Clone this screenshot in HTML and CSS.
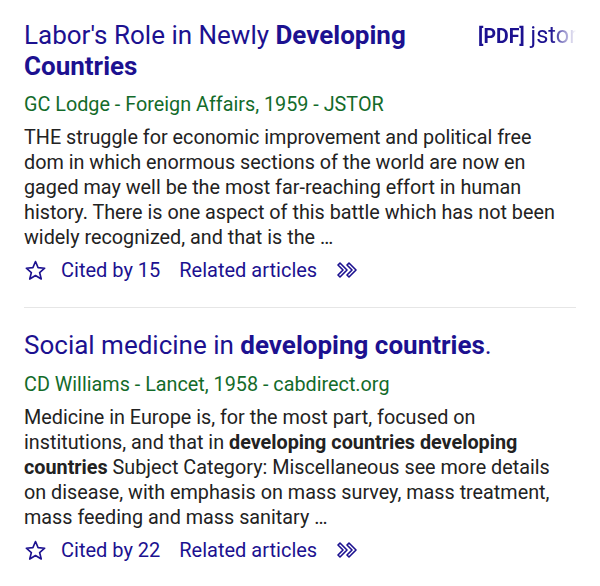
FILE: index.html
```html
<!DOCTYPE html>
<html>
<head>
<meta charset="utf-8">
<link rel="stylesheet" href="styles.css">
</head>
<body>
<div class="results">
  <div class="result">
    <div class="head">
      <h3 class="title"><a>Labor's Role in Newly <b>Developing Countries</b></a></h3>
      <div class="side"><span class="tag">[PDF]</span> jstor.org</div>
    </div>
    <div class="meta">GC Lodge - Foreign Affairs, 1959 - JSTOR</div>
    <div class="snippet">THE struggle for economic improvement and political free dom in which enormous sections of the world are now en gaged may well be the most far-reaching effort in human history. There is one aspect of this battle which has not been widely recognized, and that is the …</div>
    <div class="actions">
      <svg class="star" viewBox="0 0 24 24" width="23" height="23"><path d="M12 2.6l2.7 6.4 6.9.6-5.3 4.5 1.7 6.8L12 17.2l-6 3.7 1.7-6.8-5.3-4.5 6.9-.6z" fill="none" stroke="currentColor" stroke-width="1.7" stroke-linejoin="round"/></svg>
      <a>Cited by 15</a>
      <a>Related articles</a>
      <svg class="more" viewBox="0 0 24 16" width="24" height="16"><path d="M2 3l5 5-5 5 2 2 7-7-7-7z M11 3l5 5-5 5 2 2 7-7-7-7z" fill="none" stroke="currentColor" stroke-width="1.6" stroke-linejoin="round"/></svg>
    </div>
  </div>
  <div class="result">
    <div class="head">
      <h3 class="title"><a>Social medicine in <b>developing countries</b>.</a></h3>
    </div>
    <div class="meta">CD Williams - Lancet, 1958 - cabdirect.org</div>
    <div class="snippet">Medicine in Europe is, for the most part, focused on institutions, and that in <b>developing countries developing countries</b> Subject Category: Miscellaneous see more details on disease, with emphasis on mass survey, mass treatment, mass feeding and mass sanitary …</div>
    <div class="actions">
      <svg class="star" viewBox="0 0 24 24" width="23" height="23"><path d="M12 2.6l2.7 6.4 6.9.6-5.3 4.5 1.7 6.8L12 17.2l-6 3.7 1.7-6.8-5.3-4.5 6.9-.6z" fill="none" stroke="currentColor" stroke-width="1.7" stroke-linejoin="round"/></svg>
      <a>Cited by 22</a>
      <a>Related articles</a>
      <svg class="more" viewBox="0 0 24 16" width="24" height="16"><path d="M2 3l5 5-5 5 2 2 7-7-7-7z M11 3l5 5-5 5 2 2 7-7-7-7z" fill="none" stroke="currentColor" stroke-width="1.6" stroke-linejoin="round"/></svg>
    </div>
  </div>
</div>
</body>
</html>
```

FILE: styles.css
```css
html, body {
  margin: 0;
  padding: 0;
  background: #fff;
}
body {
  font-family: Roboto, "Noto Sans", sans-serif;
  color: #222;
  overflow: hidden;
}
.results {
  padding: 0 24px;
}
.result {
  padding: 22px 0 20px;
  border-bottom: 1px solid #e6e6e6;
}
.result:first-child {
  padding-top: 20px;
}
.result:last-child {
  border-bottom: none;
}
.head {
  display: flex;
  align-items: flex-start;
  gap: 20px;
}
.title {
  flex: 1;
  margin: 0;
  font-size: 26px;
  line-height: 31px;
  font-weight: 400;
  color: #1c1190;
}
.title b { font-weight: 700; }
.side {
  width: 98px;
  flex: none;
  white-space: nowrap;
  overflow: hidden;
  font-size: 23.5px;
  line-height: 31px;
  color: #1c1190;
  -webkit-mask-image: linear-gradient(to right, #000 74%, transparent 100%);
  mask-image: linear-gradient(to right, #000 74%, transparent 100%);
}
.head .side { margin-left: auto; }
.side .tag { font-weight: 700; font-size: 19.5px; }
.meta {
  margin-top: 11px;
  font-size: 19.8px;
  line-height: 24px;
  color: #136b2a;
}
.result + .result .meta { margin-top: 12px; }
.snippet {
  margin-top: 8px;
  font-size: 19.8px;
  line-height: 25px;
  color: #222;
}
.snippet b { font-weight: 700; }
.actions {
  display: flex;
  align-items: center;
  margin-top: 3px;
  height: 34px;
  color: #1c1190;
  font-size: 20px;
}
.actions a { margin-right: 19px; }
.star { margin-right: 14px; margin-left: 0; }
```
